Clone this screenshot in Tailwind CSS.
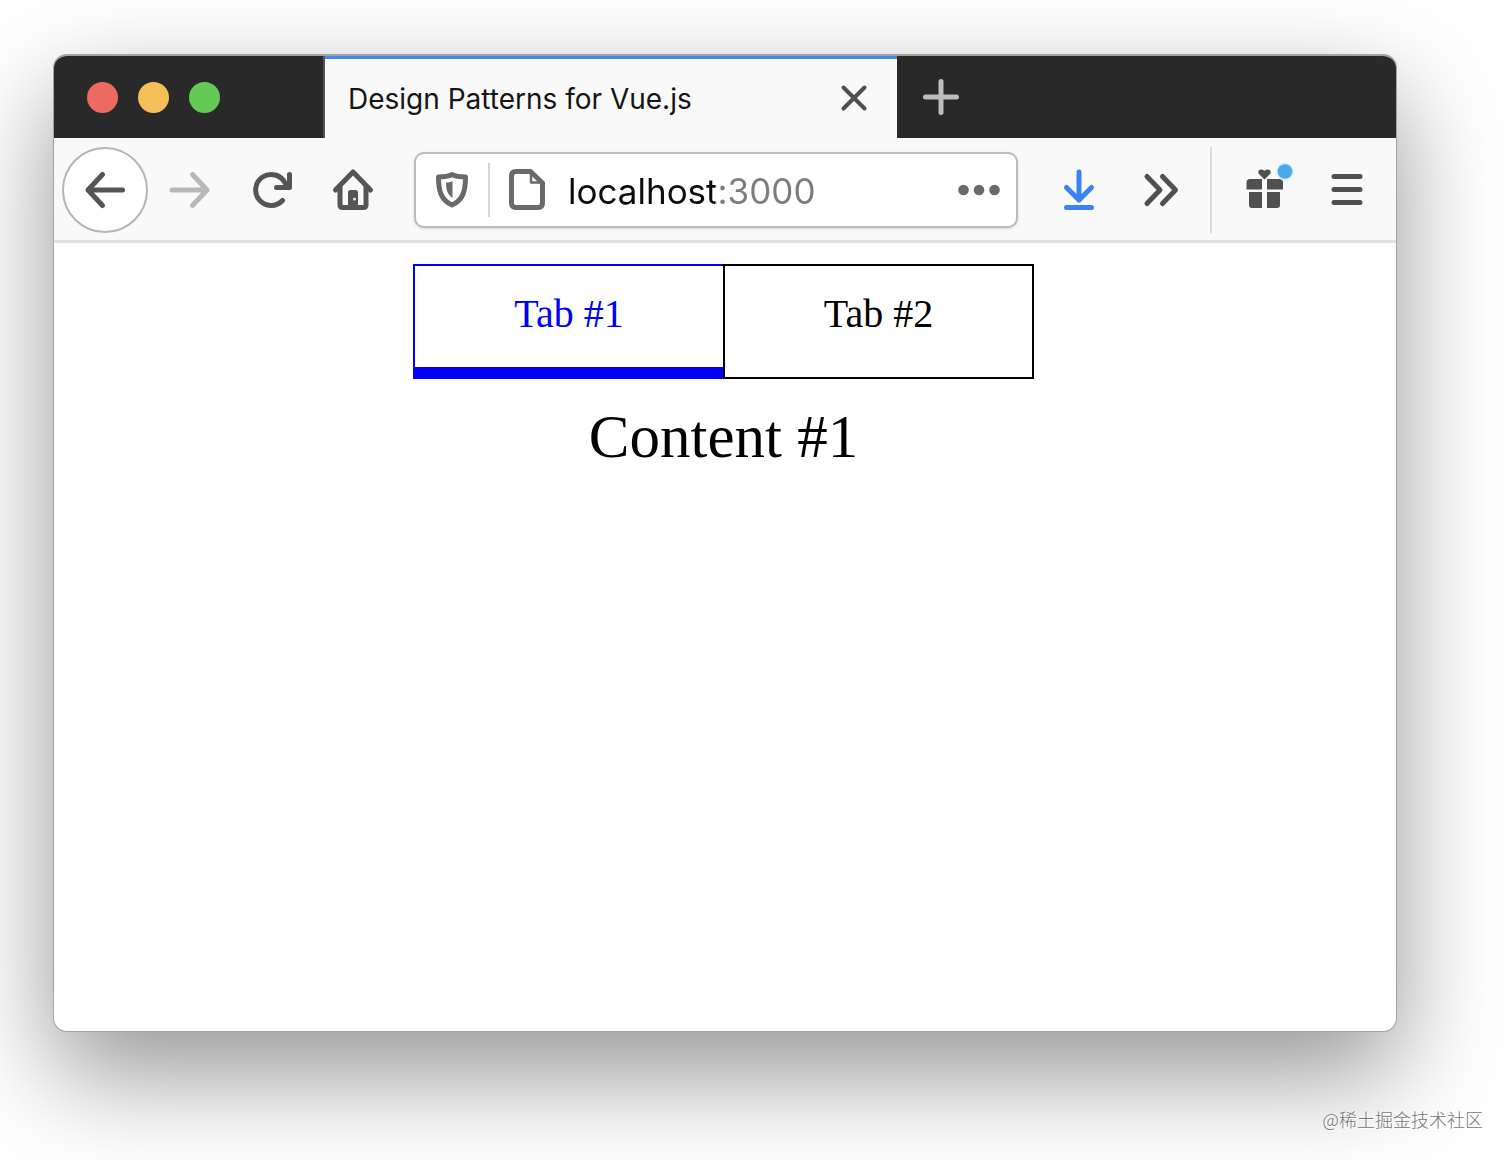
<!DOCTYPE html>
<html lang="en">
<head>
<meta charset="utf-8">
<title>Design Patterns for Vue.js</title>
<meta name="viewport" content="width=device-width, initial-scale=1">
<script src="https://cdn.jsdelivr.net/npm/@tailwindcss/browser@4"></script>
</head>
<body class="relative flex min-h-screen overflow-x-hidden bg-white pt-[54px] pr-[115px] pb-32 pl-[53px] font-[Inter,sans-serif]">

<div class="flex min-w-0 flex-1 flex-col overflow-hidden rounded-[14px] border border-t-2 border-[#a3a3a3] bg-white shadow-[0_42px_104px_rgba(0,0,0,0.42)]">

  <!-- Title bar -->
  <header class="flex h-[82px] bg-[#292929]">
    <div class="flex w-[271px] items-center gap-5 border-r-2 border-[#555] pl-[33px]">
      <button aria-label="Close window" class="size-[31px] rounded-full bg-[#ec6a5f]"></button>
      <button aria-label="Minimize window" class="size-[31px] rounded-full bg-[#f4bf57]"></button>
      <button aria-label="Zoom window" class="size-[31px] rounded-full bg-[#65c958]"></button>
    </div>
    <div class="flex w-[572px] items-center justify-between border-t-3 border-[#4189ee] bg-[#f9f9f9] pr-[21px] pl-[23px]">
      <span class="text-[28px] leading-8 text-[#151515]">Design Patterns for Vue.js</span>
      <button aria-label="Close tab">
        <svg class="size-11" viewBox="0 0 44 44" fill="none" stroke="#505050" stroke-width="4" stroke-linecap="round"><path d="M11.500 10.500l21 21M32.500 10.500l-21 21"/></svg>
      </button>
    </div>
    <button aria-label="New tab" class="px-[22px]">
      <svg class="size-11" viewBox="0 0 44 44" fill="none" stroke="#bdbdbd" stroke-width="5" stroke-linecap="round"><path d="M6.500 22h31M22 6.500v31"/></svg>
    </button>
  </header>

  <!-- Toolbar -->
  <nav class="flex h-[105px] items-center border-b-3 border-[#e2e2e2] bg-[#f9f9f9] pt-[2px] pr-2 pl-2">
    <button aria-label="Back" class="flex size-[86px] items-center justify-center rounded-full border-2 border-[#b5b5b5] bg-white">
      <svg class="size-11" viewBox="0 0 44 44" fill="none" stroke="#555" stroke-width="5" stroke-linecap="round" stroke-linejoin="round"><path d="M39.500 22H5M19.500 6.500L5 22l14.500 15.500"/></svg>
    </button>
    <button aria-label="Forward" class="flex w-[82px] justify-center">
      <svg class="size-11" viewBox="0 0 44 44" fill="none" stroke="#b8b8b8" stroke-width="5" stroke-linecap="round" stroke-linejoin="round"><path d="M5 22h35M25.500 6.500L40 22L25.500 37.500"/></svg>
    </button>
    <button aria-label="Reload" class="flex w-[82px] justify-center">
      <svg class="size-11" viewBox="0 0 44 44" fill="none" stroke="#555" stroke-width="5" stroke-linecap="round" stroke-linejoin="round"><path d="M33.500 32.500A15.500 15.500 0 1 1 36 15"/><path d="M40.500 6.500v13H27.500"/><path d="M32 20l8-8v8z" fill="#555" stroke-width="1"/></svg>
    </button>
    <button aria-label="Home" class="flex w-[82px] justify-center">
      <svg class="size-11" viewBox="0 0 44 44" fill="none" stroke="#555" stroke-width="5" stroke-linecap="round" stroke-linejoin="round"><path d="M4.500 22L22 4l17.500 18"/><path d="M9 19v18q0 2.500 2.500 2.500h21q2.500 0 2.500-2.500V19"/><path d="M17 38V24.500q0-2.500 2.500-2.500h5q2.500 0 2.500 2.500V38z" fill="#555" stroke="none"/><circle cx="23.500" cy="31" r="1.500" fill="#eee" stroke="none"/></svg>
    </button>

    <div class="mr-5 ml-5 flex h-[76px] min-w-0 flex-1 items-center rounded-[10px] border-2 border-[#bbb] bg-white shadow-sm">
      <button aria-label="Tracking protection" class="flex w-[72px] shrink-0 justify-center">
        <svg class="size-11" viewBox="0 0 44 44" fill="none" stroke="#6a6a6a" stroke-width="5" stroke-linejoin="round"><path d="M22 6.500c4 2 9 2.500 13.500 2.500 0 13-2 23-13.500 28C10.500 32 8.500 22 8.500 9c4.500 0 9.500-.5 13.500-2.500z"/><path d="M22.500 13v17c-4.500-3-6.500-8-6.500-15.500 2.500 0 4.500-.5 6.500-1.500z" fill="#6a6a6a" stroke="none"/></svg>
      </button>
      <span class="h-[54px] w-[2px] shrink-0 bg-[#d4d4d4]"></span>
      <button aria-label="Site information" class="flex w-[74px] shrink-0 justify-center">
        <svg class="size-11" viewBox="0 0 44 44" fill="none" stroke="#6a6a6a" stroke-width="5" stroke-linejoin="round"><path d="M11 3.500h14.500l12 11.500V35q0 4.500-4.500 4.500H11q-4.500 0-4.500-4.500V8q0-4.500 4.500-4.500z"/><path d="M26 4v10.500h11" stroke-width="2.500"/></svg>
      </button>
      <input aria-label="Address" type="text" value="localhost:3000" spellcheck="false" class="min-w-0 flex-1 bg-[linear-gradient(90deg,#0c0c0d_151px,#7c7c7c_151px)] bg-clip-text pt-[2px] pl-1 text-[35px] leading-11 text-transparent caret-black outline-none">
      <button aria-label="Page actions" class="flex w-[74px] shrink-0 justify-center">
        <svg class="size-11" viewBox="0 0 44 44" fill="#6a6a6a"><circle cx="6.500" cy="22" r="5.300"/><circle cx="22" cy="22" r="5.300"/><circle cx="37.500" cy="22" r="5.300"/></svg>
      </button>
    </div>

    <button aria-label="Downloads" class="flex w-[82px] justify-center">
      <svg class="size-11" viewBox="0 0 44 44" fill="none" stroke="#3a83f7" stroke-width="5" stroke-linecap="round" stroke-linejoin="round"><path d="M22 4v28M9.500 19.500L22 32l12.500-12.500M9.500 39.500h25"/></svg>
    </button>
    <button aria-label="More tools" class="flex w-[82px] justify-center">
      <svg class="size-11" viewBox="0 0 44 44" fill="none" stroke="#505050" stroke-width="5" stroke-linecap="round" stroke-linejoin="round"><path d="M8 8.500L21 22L8 35.500M23.500 8.500L36.500 22L23.500 35.500"/></svg>
    </button>
    <span class="mr-3 ml-2 h-[86px] w-[2px] bg-[#dcdcdc]"></span>
    <button aria-label="What's new" class="flex w-[82px] justify-center">
      <svg class="size-11 overflow-visible" viewBox="0 0 44 44" fill="#505050">
        <path d="M7 11h12v10.500H3.500V14.500Q3.500 11 7 11zM24 11h12.500q3.500 0 3.500 3.500v7H24zM6 24h13v16H9q-3 0-3-3zM24 24h13v13q0 3-3 3H24z"/>
        <path d="M21.500 11.500L16 6C13.500 2.500 18 -.5 21.500 3C25 -.5 29.500 2.500 27 6z"/>
        <circle cx="42" cy="3.500" r="9" fill="#d3f1fd"/><circle cx="42" cy="3.500" r="7.300" fill="#4aa8ec"/>
      </svg>
    </button>
    <button aria-label="Menu" class="flex w-[82px] justify-center">
      <svg class="size-11" viewBox="0 0 44 44" fill="none" stroke="#505050" stroke-width="5" stroke-linecap="round"><path d="M9 8.500h26M9 21.500h26M9 34.500h26"/></svg>
    </button>
  </nav>

  <!-- Page -->
  <main class="flex flex-col items-center pt-[21px] pr-[3px] font-['Liberation_Serif',serif] text-black">
    <div role="tablist" class="flex">
      <button role="tab" aria-selected="true" class="h-[115px] w-[310px] border-2 border-r-0 border-b-12 border-[#0000f5] pb-[6px] text-[40px] leading-12 text-[#0000f5]">Tab #1</button>
      <button role="tab" aria-selected="false" class="h-[115px] w-[311px] border-2 border-black pb-4 text-[40px] leading-12">Tab #2</button>
    </div>
    <div role="tabpanel" class="pt-6 text-[61px] leading-[68px]">Content #1</div>
  </main>
</div>

<p class="absolute right-[29px] bottom-[27px] font-['Noto_Sans_CJK_SC',sans-serif] text-[18px] leading-7 font-light text-[#777] [text-shadow:1px_1px_0_#fff]">@稀土掘金技术社区</p>

</body>
</html>
